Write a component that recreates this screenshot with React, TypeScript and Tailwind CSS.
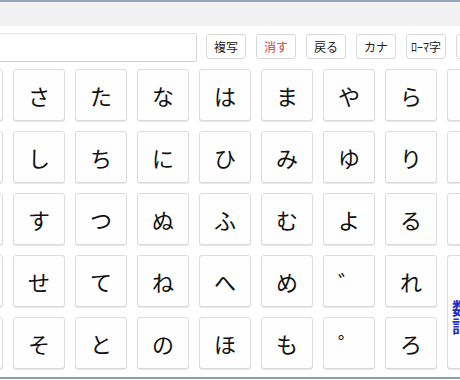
const rows: string[][] = [
  ["あ", "さ", "た", "な", "は", "ま", "や", "ら"],
  ["い", "し", "ち", "に", "ひ", "み", "ゆ", "り"],
  ["う", "す", "つ", "ぬ", "ふ", "む", "よ", "る"],
  ["え", "せ", "て", "ね", "へ", "め", "゛", "れ"],
  ["お", "そ", "と", "の", "ほ", "も", "゜", "ろ"],
]

const tools = [
  { label: "複写", red: false },
  { label: "消す", red: true },
  { label: "戻る", red: false },
  { label: "カナ", red: false },
  { label: "ﾛｰﾏ字", red: false },
  { label: "英数", red: false },
]

const keyClass =
  "flex items-center justify-center rounded-[3px] border border-[#dcdcdc] bg-[#fefefe] text-[22px] text-[#111] shadow-[0_1px_0_#e6e6e6]"

export default function App() {
  return (
    <div
      className="relative h-[380px] w-[460px] overflow-hidden bg-white"
      style={{ fontFamily: '"Noto Sans CJK JP", "Noto Sans", sans-serif' }}
    >
      {/* top bar */}
      <div className="h-[26px] border-t-2 border-[#97a5b9] bg-[#f1f1f2]" />

      {/* input + tool buttons */}
      <div className="mt-[7px] flex items-start">
        <div className="ml-[-10px] h-[29px] w-[207px] shrink-0 rounded-r-[3px] border border-[#e0e0e0] border-b-[#cfcfcf] border-r-[#d4d4d4] bg-white" />
        <div className="ml-[9px] mt-px flex gap-[10px]">
          {tools.map((t) => (
            <div
              key={t.label}
              className={
                "flex h-[25px] w-[40px] shrink-0 items-center justify-center rounded-[3px] border border-[#d8d8d8] bg-white text-[12px] " +
                (t.red ? "text-[#d23b3b]" : "text-[#222]")
              }
            >
              {t.label}
            </div>
          ))}
        </div>
      </div>

      {/* kana keyboard */}
      <div className="ml-[-49px] mt-[7px] grid grid-cols-[repeat(9,52px)] grid-rows-[repeat(5,52px)] gap-[10px]">
        {rows.map((row, r) =>
          row.map((k, c) => (
            <div
              key={r + "-" + c}
              className={keyClass}
              style={{ gridRow: r + 1, gridColumn: c + 1 }}
            >
              {k}
            </div>
          ))
        )}
        <div className={keyClass} style={{ gridRow: 1, gridColumn: 9 }}>
          わ
        </div>
        <div className={keyClass} style={{ gridRow: 2, gridColumn: 9 }}>
          を
        </div>
        <div className={keyClass} style={{ gridRow: 3, gridColumn: 9 }}>
          ん
        </div>
        <div
          className="flex flex-col items-start justify-center whitespace-nowrap rounded-[3px] border border-[#dcdcdc] bg-[#fefefe] pl-[4px] pt-[10px] text-[17px] font-bold leading-[18px] text-[#1f2fc8] shadow-[0_1px_0_#e6e6e6]"
          style={{ gridRow: "4 / span 2", gridColumn: 9 }}
        >
          <span>数字</span>
          <span>記号</span>
        </div>
      </div>

      {/* bottom edge */}
      <div className="mt-[8px] h-[2px] bg-[#8d9db2]" />
    </div>
  )
}
